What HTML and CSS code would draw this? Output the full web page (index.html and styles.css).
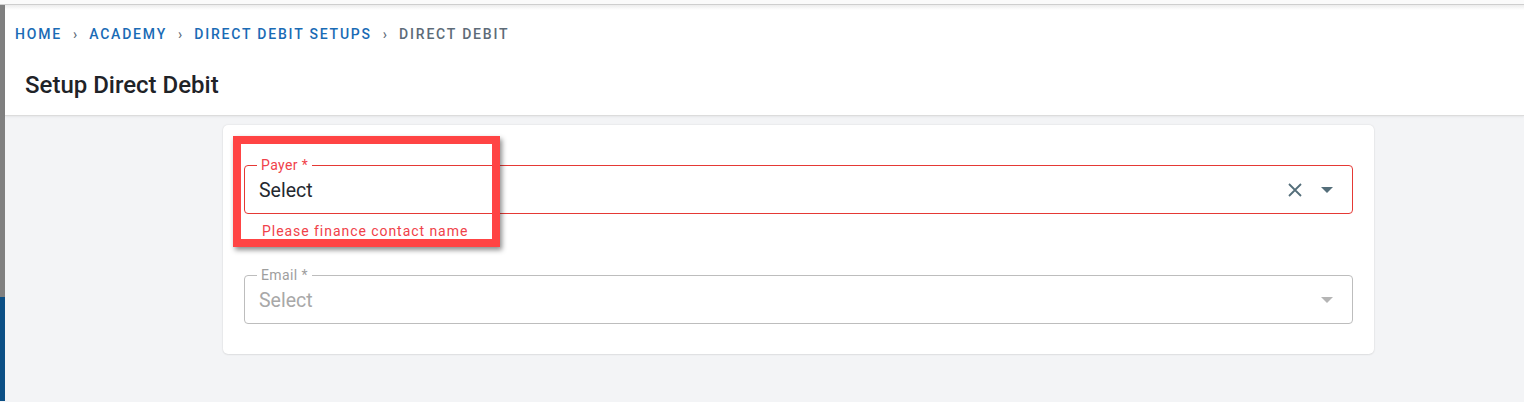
FILE: index.html
```html
<!DOCTYPE html>
<html lang="en">
<head>
<meta charset="utf-8">
<title>Setup Direct Debit</title>
<link rel="stylesheet" href="styles.css">
</head>
<body>
<div class="topstrip"></div>
<div class="app">
  <div class="sidebar"><div class="sb-grey"></div><div class="sb-blue"></div></div>
  <div class="main">
    <header class="header">
      <nav class="crumbs">
        <a class="crumb">Home</a><span class="sep">›</span>
        <a class="crumb">Academy</a><span class="sep">›</span>
        <a class="crumb">Direct Debit Setups</a><span class="sep">›</span>
        <span class="crumb current">Direct Debit</span>
      </nav>
      <h1 class="title">Setup Direct Debit</h1>
    </header>
    <section class="content">
      <div class="card">
        <div class="field error">
          <fieldset class="outline"><legend>Payer *</legend></fieldset>
          <div class="value">Select</div>
          <div class="icons">
            <svg class="clear" width="16" height="16" viewBox="0 0 16 16"><path d="M2 2L14 14M14 2L2 14" stroke="#546e7a" stroke-width="1.8" fill="none"/></svg>
            <svg class="caret" width="14" height="8" viewBox="0 0 14 8"><path d="M1 1h12L7 7z" fill="#546e7a"/></svg>
          </div>
        </div>
        <div class="helper">Please finance contact name</div>
        <div class="field disabled">
          <fieldset class="outline"><legend>Email *</legend></fieldset>
          <div class="value">Select</div>
          <div class="icons">
            <svg class="caret" width="14" height="8" viewBox="0 0 14 8"><path d="M1 1h12L7 7z" fill="#b5b5b5"/></svg>
          </div>
        </div>
        <div class="highlight"></div>
      </div>
    </section>
  </div>
</div>
</body>
</html>
```
FILE: styles.css
```css
* { box-sizing: border-box; }
html, body { margin: 0; padding: 0; }
body {
  font-family: Roboto, "Liberation Sans", Arial, sans-serif;
  background: #f3f4f6;
  width: 1524px;
  height: 402px;
  overflow: hidden;
}
.topstrip {
  height: 5px;
  background: #fafafa;
  border-bottom: 1px solid #cfcfcf;
}
.app {
  display: flex;
  height: 396px;
}
.sidebar {
  width: 5px;
  display: flex;
  flex-direction: column;
  flex-shrink: 0;
}
.sb-grey { height: 292px; background: #808080; }
.sb-blue { flex: 1; background: #0b4f85; }
.main {
  flex: 1;
  display: flex;
  flex-direction: column;
}
.header {
  background: #fff;
  height: 111px;
  border-bottom: 1px solid #dcdcdc;
  box-shadow: 0 1px 2px rgba(0,0,0,0.06);
  background-image: linear-gradient(to bottom, #ececec 0, #fff 5px);
  padding: 19px 0 0 10px;
}
.crumbs {
  display: flex;
  align-items: center;
  font-size: 14px;
  font-weight: 500;
  letter-spacing: 1.8px;
  text-transform: uppercase;
  height: 20px;
}
.crumb { color: #1a6bb5; text-decoration: none; }
.crumb.current { color: #5d6b78; }
.sep {
  color: #5d6b78;
  margin: 0 12px 0 11px;
  font-size: 14px;
  letter-spacing: 0;
}
.title {
  margin: 27px 0 0 10px;
  font-size: 24px;
  font-weight: 500;
  color: #1f2328;
  letter-spacing: 0;
}
.content {
  padding: 9px 0 0 218px;
}
.card {
  position: relative;
  width: 1151px;
  height: 229px;
  background: #fff;
  border-radius: 5px;
  box-shadow: 0 0 2px rgba(0,0,0,0.12), 0 1px 2px rgba(0,0,0,0.06);
  padding: 40px 21px 0 21px;
}
.field {
  position: relative;
  height: 49px;
  display: flex;
  align-items: center;
  padding: 0 0 0 15px;
}
.outline {
  position: absolute;
  inset: -6px 0 0 0;
  margin: 0;
  padding: 0 0 0 12px;
  border: 1px solid #bdbdbd;
  border-radius: 4px;
  pointer-events: none;
}
.outline legend {
  padding: 0 4px;
  font-size: 14px;
  line-height: 12px;
  color: #9e9e9e;
  letter-spacing: 0.4px;
}
.field.error .outline { border-color: #e53935; }
.field.error .outline legend { color: #f0424a; }
.value {
  font-size: 19.5px;
  color: #24292f;
  padding-top: 2px;
}
.field.disabled .value { color: #a8a8a8; }
.icons {
  margin-left: auto;
  display: flex;
  align-items: center;
  gap: 17px;
  padding-right: 19px;
}
.helper {
  font-size: 14px;
  color: #f0424a;
  letter-spacing: 0.95px;
  padding: 9px 0 0 18px;
  height: 61px;
}
.highlight {
  position: absolute;
  left: 10px;
  top: 11px;
  width: 267px;
  height: 111px;
  border: 8px solid #ff4444;
  box-shadow: 2px 3px 5px rgba(0,0,0,0.45);
}
```
